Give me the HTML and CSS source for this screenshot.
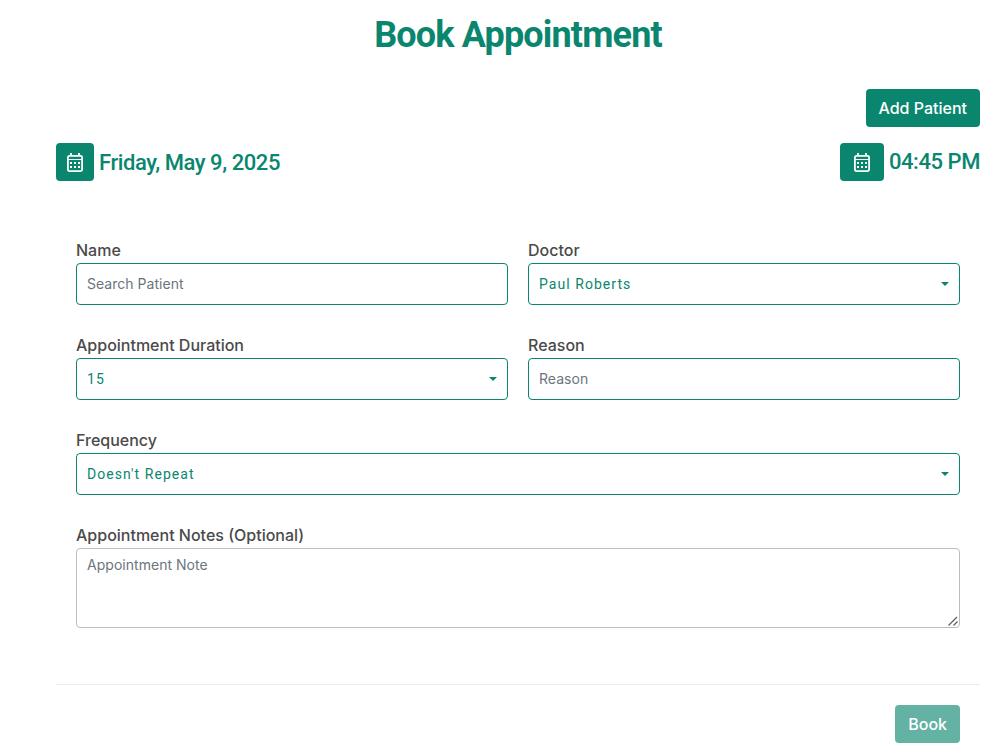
FILE: index.html
```html
<!DOCTYPE html>
<html lang="en">
<head>
<meta charset="utf-8">
<title>Book Appointment</title>
<link rel="stylesheet" href="styles.css">
</head>
<body>
<main class="page">
  <h1 class="title">Book Appointment</h1>
  <div class="actions"><button class="btn" type="button">Add Patient</button></div>
  <div class="when">
    <div class="when-item">
      <span class="icon-box">
        <svg class="cal" viewBox="0 0 16 20" aria-hidden="true"><g fill="none" stroke="currentColor"><rect x="0.9" y="3.900" width="14.200" height="15.200" rx="1.500" stroke-width="1.800"/><path d="M4 1v3M12 1v3" stroke-width="1.800"/><path d="M1 7.500h14" stroke-width="1"/></g><path fill="currentColor" d="M3 10h2v2H3zM7 10h2v2H7zM11 10h2v2h-2zM3 14h2v2H3zM7 14h2v2H7zM11 14h2v2h-2z"/></svg>
      </span>
      <span class="when-text when-date">Friday, May 9, 2025</span>
    </div>
    <div class="when-item">
      <span class="icon-box icon-box-wide">
        <svg class="cal" viewBox="0 0 16 20" aria-hidden="true"><g fill="none" stroke="currentColor"><rect x="0.9" y="3.900" width="14.200" height="15.200" rx="1.500" stroke-width="1.800"/><path d="M4 1v3M12 1v3" stroke-width="1.800"/><path d="M1 7.500h14" stroke-width="1"/></g><path fill="currentColor" d="M3 10h2v2H3zM7 10h2v2H7zM11 10h2v2h-2zM3 14h2v2H3zM7 14h2v2H7zM11 14h2v2h-2z"/></svg>
      </span>
      <span class="when-text">04:45 PM</span>
    </div>
  </div>
  <form class="form">
    <div class="field">
      <label class="label" for="name">Name</label>
      <input class="control" id="name" type="text" placeholder="Search Patient">
    </div>
    <div class="field">
      <label class="label" for="doctor">Doctor</label>
      <div class="select-wrap">
        <select class="control select" id="doctor"><option>Paul Roberts</option></select>
        <span class="caret"></span>
      </div>
    </div>
    <div class="field">
      <label class="label" for="duration">Appointment Duration</label>
      <div class="select-wrap">
        <select class="control select" id="duration"><option>15</option></select>
        <span class="caret"></span>
      </div>
    </div>
    <div class="field">
      <label class="label" for="reason">Reason</label>
      <input class="control" id="reason" type="text" placeholder="Reason">
    </div>
    <div class="field field-full">
      <label class="label" for="frequency">Frequency</label>
      <div class="select-wrap">
        <select class="control select" id="frequency"><option>Doesn't Repeat</option></select>
        <span class="caret"></span>
      </div>
    </div>
    <div class="field field-full">
      <label class="label" for="notes">Appointment Notes (Optional)</label>
      <div class="notes-wrap">
        <textarea class="control notes" id="notes" placeholder="Appointment Note"></textarea>
        <svg class="grip" viewBox="0 0 10 10" aria-hidden="true"><path d="M0.500 9.500L9 1M5.500 9.500L9.500 5.500" fill="none" stroke="#5f5f5f" stroke-width="1.300"/></svg>
      </div>
    </div>
  </form>
  <footer class="footer"><button class="btn btn-disabled" type="button">Book</button></footer>
</main>
</body>
</html>
```
FILE: styles.css
```css
* { box-sizing: border-box; }
html, body { margin: 0; padding: 0; background: #fff; }
body { font-family: Inter, "Liberation Sans", sans-serif; color: #3b3b3b; height: 753px; overflow: hidden; }
.page { margin-left: 56px; width: 924px; }
.title {
  margin: 0;
  height: 89px;
  padding-top: 13px;
  text-align: center;
  font-family: Roboto, sans-serif;
  font-size: 36px;
  line-height: 44px;
  font-weight: 700;
  letter-spacing: -0.84px;
  color: #0a866f;
}
.actions { display: flex; justify-content: flex-end; }
.btn {
  height: 38px;
  padding: 0 13px;
  border: 0;
  border-radius: 4px;
  background: #0a866f;
  color: #fff;
  font-family: Inter, sans-serif;
  font-size: 16px;
  font-weight: 500;
}
.btn-disabled { opacity: 0.63; }
.when { display: flex; justify-content: space-between; margin-top: 16px; }
.when-item { display: flex; align-items: center; gap: 5px; height: 38px; }
.icon-box {
  width: 38px;
  height: 38px;
  border-radius: 4px;
  background: #0a866f;
  color: #fff;
  display: flex;
  align-items: center;
  justify-content: center;
}
.icon-box-wide { width: 44px; }
.cal { width: 16px; height: 20px; display: block; }
.when-text {
  font-family: Roboto, sans-serif;
  font-size: 22px;
  font-weight: 500;
  line-height: 38px;
  color: #0a866f;
  letter-spacing: -0.43px;
}
.when-date { padding-top: 2px; }
.form {
  display: grid;
  grid-template-columns: 1fr 1fr;
  column-gap: 20px;
  row-gap: 30px;
  padding: 0 20px;
  margin-top: 59px;
}
.field { display: flex; flex-direction: column; min-width: 0; }
.field-full { grid-column: 1 / -1; }
.label {
  font-size: 16px;
  font-weight: 500;
  line-height: 20px;
  height: 23px;
  color: #4a4a4a;
}
.control {
  display: block;
  width: 100%;
  height: 42px;
  padding: 0 10px 2px;
  border: 1px solid #0a866f;
  border-radius: 4px;
  background: #fff;
  font-family: Inter, sans-serif;
  font-size: 14px;
  letter-spacing: 0.03px;
  color: #0a866f;
  outline: 0;
}
.control::placeholder { color: #6c757d; opacity: 1; }
.select-wrap { position: relative; }
.select {
  appearance: none;
  -webkit-appearance: none;
  padding-bottom: 0;
  font-family: Roboto, sans-serif;
  font-size: 14px;
  letter-spacing: 1.05px;
}
.caret {
  position: absolute;
  right: 11px;
  top: 19px;
  width: 0;
  height: 0;
  border-left: 4px solid transparent;
  border-right: 4px solid transparent;
  border-top: 4px solid #0a866f;
  pointer-events: none;
}
.notes-wrap { position: relative; }
.notes {
  height: 80px;
  padding: 7px 10px;
  border-color: #bdbdbd;
  resize: none;
}
.grip {
  position: absolute;
  right: 2px;
  bottom: 2px;
  width: 10px;
  height: 10px;
  pointer-events: none;
}
.footer {
  display: flex;
  justify-content: flex-end;
  margin-top: 56px;
  padding: 20px 20px 0;
  border-top: 1px solid #e9ecef;
}
```
